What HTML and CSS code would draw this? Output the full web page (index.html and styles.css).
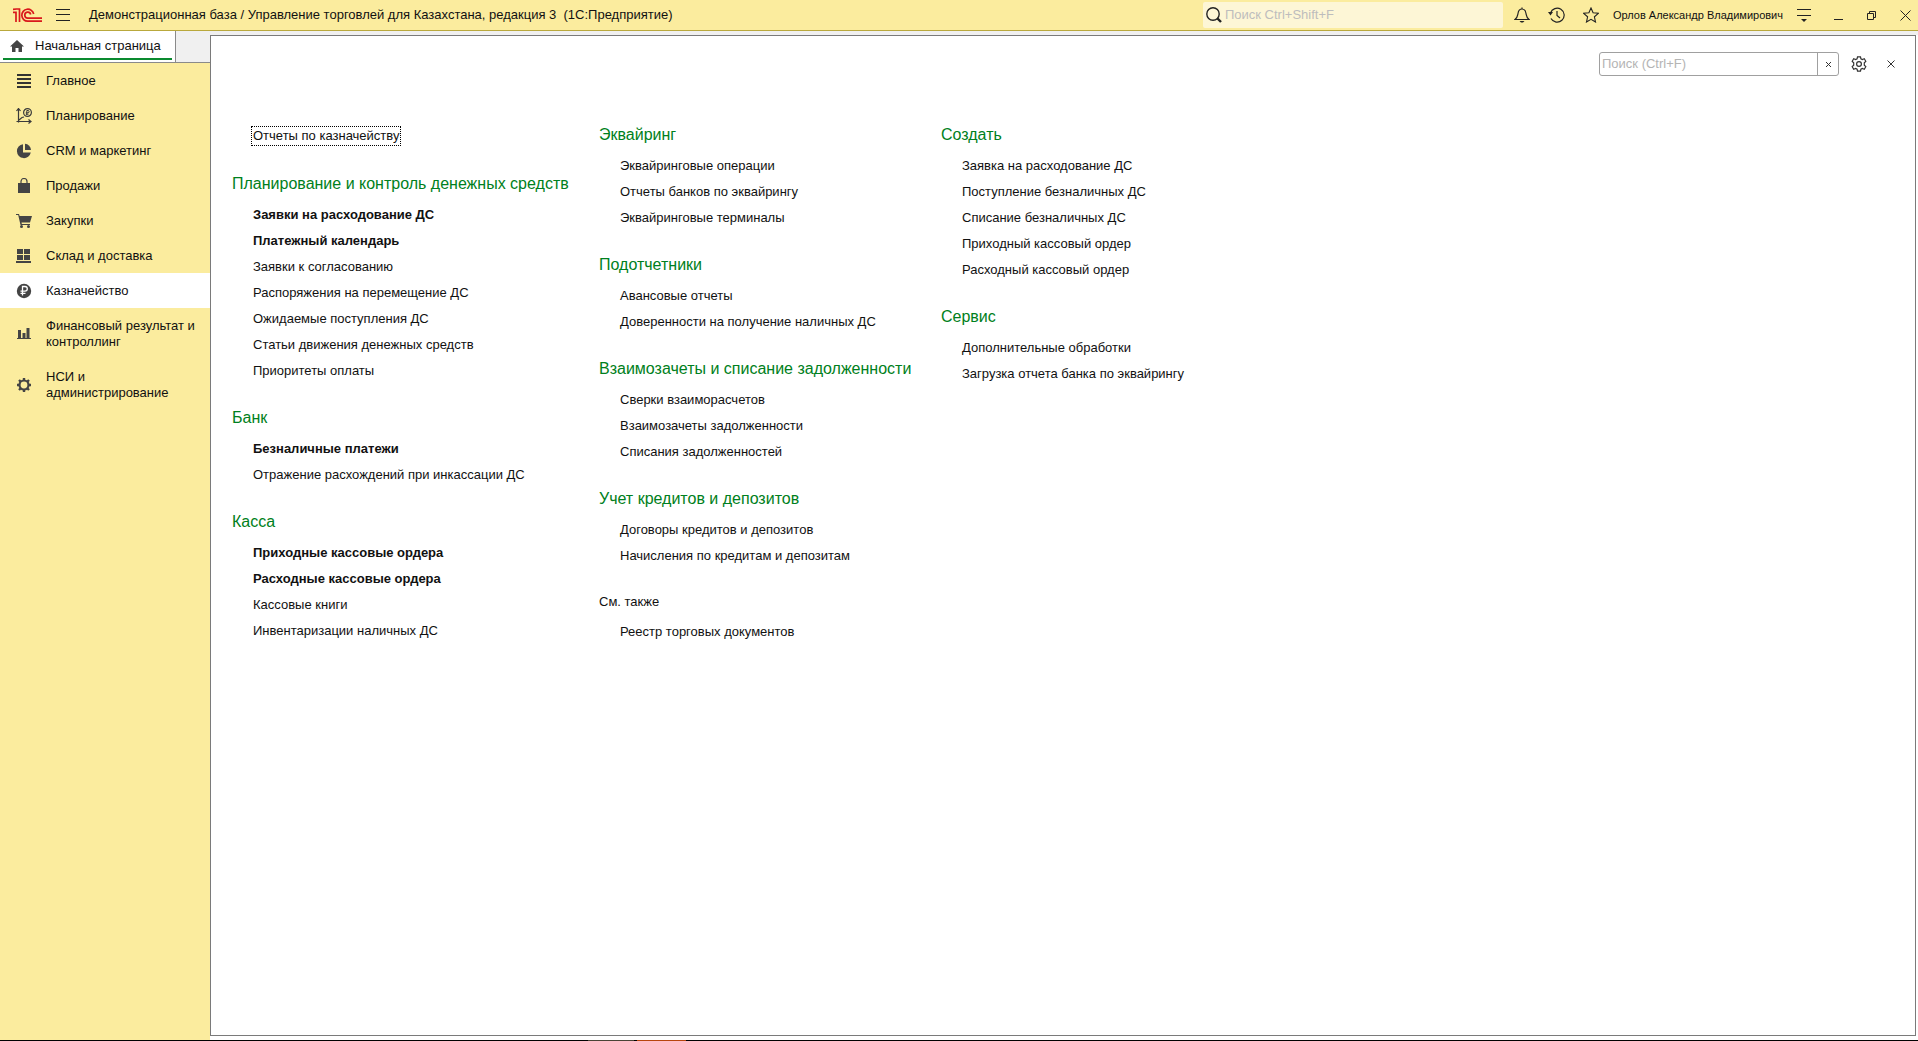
FILE: index.html
```html
<!DOCTYPE html>
<html lang="ru">
<head>
<meta charset="utf-8">
<title>Управление торговлей для Казахстана</title>
<link rel="stylesheet" href="styles.css">
</head>
<body>
<div class="app">
  <header class="titlebar">
    <svg class="logo" width="29" height="15" viewBox="0 0 29 15" fill="none" stroke="#d9181c" stroke-width="1.700"><path d="M0 4.300h3V14M0 1.400L3.500 1H6.500V14"/><path d="M20.700 6a6 6 0 1 0-6 7.200H29"/><path d="M17.700 6.500a3 3 0 1 0-3 3.600H29"/></svg>
    <button class="icon-btn menu-btn" aria-label="Меню"><svg width="14" height="12" viewBox="0 0 14 12" stroke="#222" stroke-width="1"><path d="M0 .5h14M0 5.500h14M0 11.500h14"/></svg></button>
    <h1 class="app-title">Демонстрационная база / Управление торговлей для Казахстана, редакция 3&nbsp; (1С:Предприятие)</h1>
    <label class="global-search">
      <svg width="16" height="16" viewBox="0 0 16 16" fill="none" stroke="#222"><circle cx="7" cy="7" r="6.200" stroke-width="1.400"/><path d="M11.500 11.500L15 15" stroke-width="2.400"/></svg>
      <input type="text" placeholder="Поиск Ctrl+Shift+F" aria-label="Поиск">
    </label>
    <div class="tools">
      <button class="icon-btn" aria-label="Уведомления"><svg width="16" height="16" viewBox="0 0 16 16" fill="none" stroke="#222" stroke-width="1.200"><path d="M1 12.500h14C12.500 10.500 12.500 9 12 6.500 11.600 3.500 10 2 8 2S4.400 3.500 4 6.500C3.500 9 3.500 10.500 1 12.500zM8 2V.5"/><path d="M5.500 14h5l-1.500 1.500h-2z" fill="#222" stroke="none"/></svg></button>
      <button class="icon-btn" aria-label="История"><svg width="17" height="16" viewBox="0 0 17 16" fill="none" stroke="#222" stroke-width="1.200"><path d="M2.500 6A7 7 0 1 1 3 11.500M9 4v4.500l3 2.500"/><path d="M0 5l5 0-2.500 3.500z" fill="#222" stroke="none"/></svg></button>
      <button class="icon-btn" aria-label="Избранное"><svg width="16" height="16" viewBox="0 0 16 16" fill="none" stroke="#222" stroke-width="1.100"><path d="M8 1l2.100 4.800 5.200.5-3.900 3.500 1.100 5.200L8 12.300 3.500 15l1.100-5.200L.7 6.300l5.200-.5z"/></svg></button>
      <a class="user" href="#">Орлов Александр Владимирович</a>
      <button class="icon-btn" aria-label="Сервис и настройки"><svg width="14" height="13" viewBox="0 0 14 13" fill="none" stroke="#222"><path d="M0 .5h14M0 6.500h14"/><path d="M4 10h6l-3 3z" fill="#222" stroke="none"/></svg></button>
    </div>
    <div class="window-tools">
      <button class="icon-btn" aria-label="Свернуть"><svg width="9" height="10" viewBox="0 0 9 10" stroke="#222"><path d="M0 9.500h9"/></svg></button>
      <button class="icon-btn" aria-label="Развернуть"><svg width="9" height="9" viewBox="0 0 9 9" fill="none" stroke="#222"><path d="M.5 2.500h6v6h-6zM2.500 2V.5h6v6H7"/></svg></button>
      <button class="icon-btn" aria-label="Закрыть"><svg width="11" height="11" viewBox="0 0 11 11" stroke="#222"><path d="M.5.5l10 10M10.500.5l-10 10"/></svg></button>
    </div>
  </header>

  <div class="workspace">
    <aside class="side">
      <div class="tabs">
        <a class="tab" href="#"><svg width="14" height="12" viewBox="0 0 14 12" fill="#444"><path d="M7 0l7 6.500h-2V12H8.500V8h-3v4H2V6.500H0z"/></svg><span>Начальная страница</span></a>
      </div>
      <nav class="sections" aria-label="Разделы">
        <a href="#"><svg viewBox="0 0 16 16" stroke="#333" stroke-width="2"><path d="M1 2h14M1 6h14M1 10h14M1 14h14"/></svg><span>Главное</span></a>
        <a href="#"><svg viewBox="0 0 16 16" fill="none" stroke="#3b3b3b" stroke-width="1.200"><path d="M2.500 14.500V1M.5 3l2-2.500 2 2.500M.5 13.500h14M12.500 11.500l2.500 2-2.500 2M3 12l3-2.500 2-.5"/><circle cx="11.500" cy="4.500" r="3.900"/><path d="M10.800 7V2.500h1.200a1.100 1.100 0 0 1 0 2.300H9.800M9.800 6.200h2.700" stroke-width="1"/></svg><span>Планирование</span></a>
        <a href="#"><svg viewBox="0 0 16 16" fill="#444"><path d="M7 1.200a7 7 0 1 0 7.800 8.300H7z"/><path d="M9 .8V7h6A6.500 6.500 0 0 0 9 .8z"/></svg><span>CRM и маркетинг</span></a>
        <a href="#"><svg viewBox="0 0 16 16" fill="#444"><path d="M2 5h12v10H2z"/><path d="M5 7V3.500a3 3 0 0 1 6 0V7" fill="none" stroke="#444" stroke-width="1.200"/></svg><span>Продажи</span></a>
        <a href="#"><svg viewBox="0 0 16 16" fill="#444"><path d="M0 1h3l.6 2H16l-2 6.500H5.500l.3 1.500H14v1H4.500L2.200 2H0z"/><circle cx="5.500" cy="13.500" r="1.500"/><circle cx="12.500" cy="13.500" r="1.500"/></svg><span>Закупки</span></a>
        <a href="#"><svg viewBox="0 0 16 16" fill="#444"><path d="M1 1h6v5H1zM8 1h6v5H8zM1 7h6v5H1zM8 7h6v5H8zM0 13h15v2H0z"/></svg><span>Склад и доставка</span></a>
        <a href="#" class="current" aria-current="page"><svg viewBox="0 0 16 16" fill="#444"><circle cx="8" cy="8" r="7.200"/><path d="M6.500 12.500v-9H9a2.300 2.300 0 0 1 0 4.600H4.500M4.500 10.300h5" fill="none" stroke="#fff" stroke-width="1.300"/></svg><span>Казначейство</span></a>
        <a href="#"><svg viewBox="0 0 16 16" fill="#444"><path d="M2 4h3v8H2zM6.500 7h3v5h-3zM10.500 2h3v10h-3zM1 12h14v1H1z"/></svg><span>Финансовый результат и контроллинг</span></a>
        <a href="#"><svg viewBox="0 0 16 16" fill="none" stroke="#444"><circle cx="8" cy="8" r="4.500" stroke-width="2.200"/><path d="M8 1v2M8 13v2M1 8h2M13 8h2M3 3l1.500 1.500M11.500 11.500L13 13M3 13l1.500-1.500M11.500 4.500L13 3" stroke-width="2.400"/></svg><span>НСИ и администрирование</span></a>
      </nav>
    </aside>

    <div class="stage">
    <main class="panel">
      <div class="panel-bar">
        <div class="panel-search">
          <input type="text" placeholder="Поиск (Ctrl+F)" aria-label="Поиск в разделе">
          <button aria-label="Очистить"><svg width="5" height="5" viewBox="0 0 5 5" stroke="#333"><path d="M0 0l5 5M5 0L0 5"/></svg></button>
        </div>
        <button class="icon-btn" aria-label="Настройки"><svg width="16" height="16" viewBox="0 0 16 16" fill="none" stroke="#333" stroke-width="1.200"><circle cx="8" cy="8" r="2.400"/><path d="M6.500.8h3l.4 2 1.500.8 1.900-.8 1.500 2.500-1.500 1.500v2.400l1.500 1.500-1.500 2.500-1.900-.8-1.500.8-.4 2h-3l-.4-2-1.500-.8-1.900.8-1.500-2.500 1.500-1.500V6.800L1.200 5.300l1.500-2.500 1.900.8 1.500-.8z"/></svg></button>
        <button class="icon-btn" aria-label="Закрыть раздел"><svg width="8" height="8" viewBox="0 0 8 8" stroke="#333"><path d="M.5.5l7 7M7.500.5l-7 7"/></svg></button>
      </div>
      <div class="columns">
        <div class="column">
          <a class="report-link" href="#">Отчеты по казначейству</a>
          <section>
            <h2>Планирование и контроль денежных средств</h2>
            <ul>
              <li><a class="key" href="#">Заявки на расходование ДС</a></li>
              <li><a class="key" href="#">Платежный календарь</a></li>
              <li><a href="#">Заявки к согласованию</a></li>
              <li><a href="#">Распоряжения на перемещение ДС</a></li>
              <li><a href="#">Ожидаемые поступления ДС</a></li>
              <li><a href="#">Статьи движения денежных средств</a></li>
              <li><a href="#">Приоритеты оплаты</a></li>
            </ul>
          </section>
          <section>
            <h2>Банк</h2>
            <ul>
              <li><a class="key" href="#">Безналичные платежи</a></li>
              <li><a href="#">Отражение расхождений при инкассации ДС</a></li>
            </ul>
          </section>
          <section>
            <h2>Касса</h2>
            <ul>
              <li><a class="key" href="#">Приходные кассовые ордера</a></li>
              <li><a class="key" href="#">Расходные кассовые ордера</a></li>
              <li><a href="#">Кассовые книги</a></li>
              <li><a href="#">Инвентаризации наличных ДС</a></li>
            </ul>
          </section>
        </div>
        <div class="column">
          <section>
            <h2>Эквайринг</h2>
            <ul>
              <li><a href="#">Эквайринговые операции</a></li>
              <li><a href="#">Отчеты банков по эквайрингу</a></li>
              <li><a href="#">Эквайринговые терминалы</a></li>
            </ul>
          </section>
          <section>
            <h2>Подотчетники</h2>
            <ul>
              <li><a href="#">Авансовые отчеты</a></li>
              <li><a href="#">Доверенности на получение наличных ДС</a></li>
            </ul>
          </section>
          <section>
            <h2>Взаимозачеты и списание задолженности</h2>
            <ul>
              <li><a href="#">Сверки взаиморасчетов</a></li>
              <li><a href="#">Взаимозачеты задолженности</a></li>
              <li><a href="#">Списания задолженностей</a></li>
            </ul>
          </section>
          <section>
            <h2>Учет кредитов и депозитов</h2>
            <ul>
              <li><a href="#">Договоры кредитов и депозитов</a></li>
              <li><a href="#">Начисления по кредитам и депозитам</a></li>
            </ul>
          </section>
          <section>
            <h2 class="minor">См. также</h2>
            <ul>
              <li><a href="#">Реестр торговых документов</a></li>
            </ul>
          </section>
        </div>
        <div class="column">
          <section>
            <h2>Создать</h2>
            <ul>
              <li><a href="#">Заявка на расходование ДС</a></li>
              <li><a href="#">Поступление безналичных ДС</a></li>
              <li><a href="#">Списание безналичных ДС</a></li>
              <li><a href="#">Приходный кассовый ордер</a></li>
              <li><a href="#">Расходный кассовый ордер</a></li>
            </ul>
          </section>
          <section>
            <h2>Сервис</h2>
            <ul>
              <li><a href="#">Дополнительные обработки</a></li>
              <li><a href="#">Загрузка отчета банка по эквайрингу</a></li>
            </ul>
          </section>
        </div>
      </div>
    </main>
    </div>
  </div>
  <div class="taskbar-edge"></div>
</div>
</body>
</html>
```
FILE: styles.css
```css
* { box-sizing: border-box; }

body {
  margin: 0;
  font-family: "Liberation Sans", Arial, sans-serif;
  font-size: 13px;
  line-height: 16px;
  color: #111;
  background: #fff;
}

a { color: inherit; text-decoration: none; }
h1, h2, ul { margin: 0; padding: 0; font-weight: normal; }
ul { list-style: none; }
svg { display: block; flex: none; }
input, button { font: inherit; color: inherit; }

.icon-btn {
  display: flex;
  padding: 0;
  border: 0;
  background: none;
}

/* Title bar */
.app {
  display: flex;
  flex-direction: column;
  min-height: 100vh;
}
.titlebar {
  display: flex;
  align-items: center;
  height: 31px;
  padding: 0 7px 0 13px;
  background: #fbec9e;
  border-bottom: 1px solid #b9a83c;
}
.menu-btn { margin-left: 14px; }
.app-title {
  flex: 1;
  margin-left: 19px;
  font-size: 13px;
  white-space: nowrap;
}
.global-search {
  display: flex;
  align-items: center;
  gap: 3px;
  width: 300px;
  height: 26px;
  padding: 0 3px;
  border-radius: 2px;
  background: #fdf6d6;
}
.global-search input {
  flex: 1;
  min-width: 0;
  padding: 0;
  border: 0;
  outline: 0;
  background: none;
}
.global-search input::placeholder { color: #bdbdbd; opacity: 1; }
.tools {
  display: flex;
  align-items: center;
  gap: 18px;
  margin-left: 11px;
}
.user { margin: 0 -4px; font-size: 11px; white-space: nowrap; }
.window-tools {
  display: flex;
  align-items: center;
  gap: 24px;
  margin-left: 23px;
}

/* Workspace */
.workspace { display: flex; flex: 1; }
.side {
  display: flex;
  flex-direction: column;
  width: 210px;
}
.tabs {
  display: flex;
  height: 32px;
  border-bottom: 1px solid #8a8a8a;
  background: #f0f0f0;
}
.tab {
  display: flex;
  align-items: center;
  gap: 11px;
  width: 176px;
  padding: 0 11px 1px 10px;
  border-right: 1px solid #8a8a8a;
  background: linear-gradient(#0a8a2f, #0a8a2f) 3px 27px / 169px 2px no-repeat #fff;
  white-space: nowrap;
}
.sections {
  flex: 1;
  background: #fbec9e;
}
.sections a {
  display: flex;
  align-items: center;
  gap: 14px;
  padding: 10px 12px 9px 16px;
}
.sections svg { width: 16px; height: 16px; }
.sections .current { background: #fff; }

.stage {
  display: flex;
  flex: 1;
  padding: 4px 2px 4px 0;
  background: linear-gradient(#f0f0f0, #f0f0f0) 0 0 / 100% 4px no-repeat #fff;
}
.panel {
  flex: 1;
  border: 1px solid #7a7a7a;
  background: #fff;
}
.panel-bar {
  display: flex;
  align-items: center;
  justify-content: flex-end;
  gap: 20px;
  padding: 16px 20px 0;
}
.panel-search {
  display: flex;
  width: 240px;
  height: 24px;
  margin-right: -8px;
  border: 1px solid #a0a0a0;
  border-radius: 3px;
}
.panel-search input {
  flex: 1;
  min-width: 0;
  padding: 0 2px;
  border: 0;
  outline: 0;
  background: none;
}
.panel-search input::placeholder { color: #b4b4b4; opacity: 1; }
.panel-search button {
  display: flex;
  align-items: center;
  justify-content: center;
  width: 21px;
  padding: 0;
  border: 0;
  border-left: 1px solid #a0a0a0;
  background: none;
}

/* Command columns */
.columns {
  display: grid;
  grid-template-columns: 367px 342px auto;
  padding: 46px 21px 20px;
}
.column { display: flex; flex-direction: column; gap: 21px; }
.column h2 {
  font-size: 16px;
  line-height: 26px;
  padding-bottom: 5px;
  color: #008020;
  white-space: nowrap;
}
.column h2.minor { font-size: 13px; line-height: 24px; color: #111; }
.column ul { padding-left: 21px; }
.column li { line-height: 26px; white-space: nowrap; }
.key { font-weight: bold; }
.report-link {
  align-self: flex-start;
  margin: 4px 0 4px 19px;
  padding: 1px;
  border: 1px dotted #000;
}

.taskbar-edge {
  height: 1px;
  background: linear-gradient(90deg, #000 588px, #4a4436 588px 634px, #000 634px 637px, #b8450e 637px 686px, #000 686px);
}
```
